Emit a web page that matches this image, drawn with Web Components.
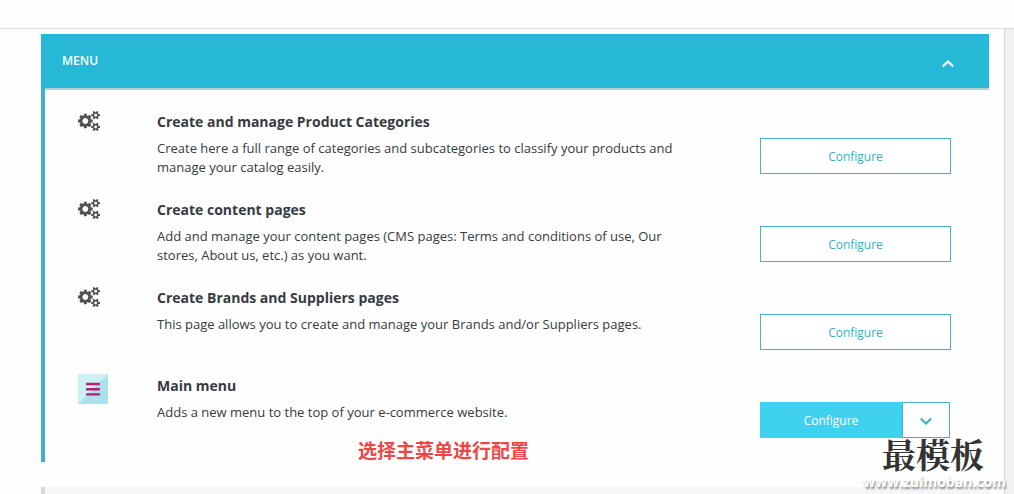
<!DOCTYPE html>
<html lang="en">
<head>
<meta charset="utf-8">
<title>Menu</title>
<style>
    body {
        margin: 0;
        background: #fefefe;
        color: #363a41;
        font: 13px/19px "Open Sans", "Noto Sans CJK SC", sans-serif;
    }
</style>
</head>
<body>
<theme-page>
    <theme-panel heading="MENU">
        <config-row heading="Create and manage Product Categories">
            <cogs-icon slot="icon"></cogs-icon>
            Create here a full range of categories and subcategories to classify your products and manage your catalog easily.
            <config-button slot="action"></config-button>
        </config-row>
        <config-row heading="Create content pages">
            <cogs-icon slot="icon"></cogs-icon>
            Add and manage your content pages (CMS pages: Terms and conditions of use, Our stores, About us, etc.) as you want.
            <config-button slot="action"></config-button>
        </config-row>
        <config-row heading="Create Brands and Suppliers pages">
            <cogs-icon slot="icon"></cogs-icon>
            This page allows you to create and manage your Brands and/or Suppliers pages.
            <config-button slot="action"></config-button>
        </config-row>
        <config-row heading="Main menu">
            <menu-icon slot="icon"></menu-icon>
            Adds a new menu to the top of your e-commerce website.
            <config-button slot="action" split></config-button>
        </config-row>
        <red-note slot="note">选择主菜单进行配置</red-note>
    </theme-panel>
</theme-page>
<water-mark>最模板<span slot="url">www.zuimoban.com</span></water-mark>

<script>
class ThemePage extends HTMLElement {
    constructor() {
        super();
        this.attachShadow({mode: 'open'});
        this.shadowRoot.innerHTML = `
            <style>
                :host {
                    display: flex;
                    flex-direction: column;
                    height: 100vh;
                    overflow: hidden;
                }
                header {
                    flex: none;
                    height: 28px;
                    border-bottom: 1px solid #d9dcde;
                }
                .columns {
                    flex: 1;
                    display: flex;
                    min-height: 0;
                }
                main {
                    flex: 1;
                    padding: 5px 15px 0 41px;
                }
                aside {
                    width: 9px;
                    background: #eff1f2;
                    border-left: 1px solid #d3d6d9;
                }
                .next {
                    height: 54px;
                    margin-top: 25px;
                    background: #f5f6f8;
                    border-left: 4px solid #dadadb;
                }
            </style>
            <header></header>
            <div class="columns">
                <main>
                    <slot></slot>
                    <div class="next"></div>
                </main>
                <aside></aside>
            </div>
        `;
    }
}
customElements.define('theme-page', ThemePage);

class ThemePanel extends HTMLElement {
    constructor() {
        super();
        this.attachShadow({mode: 'open'});
        this.shadowRoot.innerHTML = `
            <style>
                :host {
                    display: block;
                    position: relative;
                    border-left: 4px solid #3fb0c8;
                }
                header {
                    display: flex;
                    align-items: center;
                    justify-content: space-between;
                    height: 54px;
                    margin-left: -4px;
                    padding: 0 34px 0 21px;
                    box-sizing: border-box;
                    background: #25b9d7;
                    color: white;
                }
                h2 {
                    margin: 0;
                    padding-bottom: 2px;
                    font-size: 12px;
                    font-weight: 600;
                }
                button {
                    display: flex;
                    padding: 6px 0 0;
                    border: 0;
                    background: none;
                    color: inherit;
                }
                .rows {
                    padding-top: 20px;
                    border-top: 2px solid #b5cdd3;
                }
            </style>
            <header>
                <h2></h2>
                <button aria-label="Collapse">
                    <svg width="14" height="10" viewBox="0 0 14 10" fill="none" stroke="currentColor" stroke-width="2.2"><path d="M1.8 7.5 7 2.5l5.2 5"/></svg>
                </button>
            </header>
            <div class="rows"><slot></slot></div>
            <slot name="note"></slot>
        `;
    }

    connectedCallback() {
        this.shadowRoot.querySelector('h2').textContent = this.getAttribute('heading');
    }
}
customElements.define('theme-panel', ThemePanel);

class ConfigRow extends HTMLElement {
    constructor() {
        super();
        this.attachShadow({mode: 'open'});
        this.shadowRoot.innerHTML = `
            <style>
                :host {
                    display: flex;
                    min-height: 88px;
                    padding: 0 38px 0 33px;
                }
                .icon {
                    flex: none;
                    width: 79px;
                }
                .text {
                    flex: 1;
                    padding-right: 86px;
                }
                .action {
                    flex: none;
                    width: 191px;
                    padding-top: 28px;
                }
                h3 {
                    margin: 0 0 5px;
                    font-size: 14px;
                    line-height: 24px;
                    font-weight: 700;
                }
                p {
                    margin: 0;
                }
            </style>
            <div class="icon"><slot name="icon"></slot></div>
            <div class="text">
                <h3></h3>
                <p><slot></slot></p>
            </div>
            <div class="action"><slot name="action"></slot></div>
        `;
    }

    connectedCallback() {
        this.shadowRoot.querySelector('h3').textContent = this.getAttribute('heading');
    }
}
customElements.define('config-row', ConfigRow);

// plain outlined button, or a filled one with a dropdown arrow when "split" is set
class ConfigButton extends HTMLElement {
    constructor() {
        super();
        this.attachShadow({mode: 'open'});
        this.shadowRoot.innerHTML = `
            <style>
                :host {
                    display: flex;
                }
                button {
                    flex: 1;
                    height: 36px;
                    padding: 1px 0 0;
                    border: 1px solid #45b1c5;
                    background: white;
                    color: #38afc8;
                    font: 12px/18px "Open Sans", sans-serif;
                }
                .toggle {
                    display: none;
                    flex: none;
                    width: 48px;
                    align-items: center;
                    justify-content: center;
                }
                :host([split]) {
                    padding-right: 1px;
                }
                :host([split]) .main {
                    border-color: #3ed2f0;
                    background: #3ed2f0;
                    color: white;
                }
                :host([split]) .toggle {
                    display: flex;
                }
            </style>
            <button class="main">Configure</button>
            <button class="toggle" aria-label="More actions">
                <svg width="14" height="10" viewBox="0 0 14 10" fill="none" stroke="currentColor" stroke-width="2"><path d="M1.8 2.5 7 7.5l5.2-5"/></svg>
            </button>
        `;
    }
}
customElements.define('config-button', ConfigButton);

class CogsIcon extends HTMLElement {
    constructor() {
        super();
        this.attachShadow({mode: 'open'});
        this.shadowRoot.innerHTML = `
            <style>
                :host {
                    display: block;
                    color: #4f5154;
                }
                svg {
                    display: block;
                }
            </style>
            <svg width="22" height="22" viewBox="0 0 1920 1792" fill="currentColor"><path d="M896 896q0-106-75-181t-181-75-181 75-75 181 75 181 181 75 181-75 75-181zm768 512q0-52-38-90t-90-38-90 38-38 90q0 53 37.500 90.500t90.500 37.500 90.500-37.500 37.500-90.500zm0-1024q0-52-38-90t-90-38-90 38-38 90q0 53 37.500 90.500t90.500 37.500 90.500-37.500 37.500-90.500zm-384 421v185q0 10-7 19.500t-16 10.500l-155 24q-11 35-32 76 34 48 90 115 7 11 7 20 0 12-7 19-23 30-82.500 89.500t-78.500 59.500q-11 0-21-7l-115-90q-37 19-77 31-11 108-23 155-7 24-30 24h-186q-11 0-20-7.500t-10-17.500l-23-153q-34-10-75-31l-118 89q-7 7-20 7-11 0-21-8-144-133-144-160 0-9 7-19 10-14 41-53t47-61q-23-44-35-82l-152-24q-10-1-17-9.500t-7-19.500v-185q0-10 7-19.500t16-10.500l155-24q11-35 32-76-34-48-90-115-7-11-7-20 0-12 7-20 22-30 82-89t79-59q11 0 21 7l115 90q34-18 77-32 11-108 23-154 7-24 30-24h186q11 0 20 7.500t10 17.500l23 153q34 10 75 31l118-89q8-7 20-7 11 0 21 8 144 133 144 160 0 8-7 19-12 16-42 54t-45 60q23 48 34 82l152 23q10 2 17 10.500t7 19.500zm640 533v140q0 16-149 31-12 27-30 52 51 113 51 138 0 4-4 7-122 71-124 71-8 0-46-47t-52-68q-20 2-30 2t-30-2q-14 21-52 68t-46 47q-2 0-124-71-4-3-4-7 0-25 51-138-18-25-30-52-149-15-149-31v-140q0-16 149-31 13-29 30-52-51-113-51-138 0-4 4-7 4-2 35-20t59-34 30-16q8 0 46 46.500t52 67.500q20-2 30-2t30 2q51-71 92-112l6-2q4 0 124 70 4 3 4 7 0 25-51 138 17 23 30 52 149 15 149 31zm0-1024v140q0 16-149 31-12 27-30 52 51 113 51 138 0 4-4 7-122 71-124 71-8 0-46-47t-52-68q-20 2-30 2t-30-2q-14 21-52 68t-46 47q-2 0-124-71-4-3-4-7 0-25 51-138-18-25-30-52-149-15-149-31v-140q0-16 149-31 13-29 30-52-51-113-51-138 0-4 4-7 4-2 35-20t59-34 30-16q8 0 46 46.500t52 67.500q20-2 30-2t30 2q51-71 92-112l6-2q4 0 124 70 4 3 4 7 0 25-51 138 17 23 30 52 149 15 149 31z"/></svg>
        `;
    }
}
customElements.define('cogs-icon', CogsIcon);

class MenuIcon extends HTMLElement {
    constructor() {
        super();
        this.attachShadow({mode: 'open'});
        this.shadowRoot.innerHTML = `
            <style>
                :host, svg {
                    display: block;
                }
            </style>
            <svg width="30" height="30" viewBox="0 0 30 30">
                <path fill="#cdf0f6" d="M0 0h30v30H0z"/>
                <path fill="#a9e2ee" d="M30 0v30H0z"/>
                <path stroke="#b8206b" stroke-width="2.400" stroke-linecap="round" d="M9 10h12M9 15.200h12M9 20.400h12"/>
            </svg>
        `;
    }
}
customElements.define('menu-icon', MenuIcon);

// annotation lying over the panel
class RedNote extends HTMLElement {
    constructor() {
        super();
        this.attachShadow({mode: 'open'});
        this.shadowRoot.innerHTML = `
            <style>
                :host {
                    position: absolute;
                    left: 313px;
                    bottom: 0;
                    color: #ee4646;
                    font: 700 19px/24px "Noto Sans CJK SC", sans-serif;
                    white-space: nowrap;
                }
            </style>
            <slot></slot>
        `;
    }
}
customElements.define('red-note', RedNote);

class WaterMark extends HTMLElement {
    constructor() {
        super();
        this.attachShadow({mode: 'open'});
        this.shadowRoot.innerHTML = `
            <style>
                :host {
                    position: absolute;
                    right: 8px;
                    bottom: 3px;
                    display: flex;
                    flex-direction: column;
                    align-items: flex-end;
                    white-space: nowrap;
                }
                .name {
                    padding-right: 22px;
                    color: #333;
                    font: 700 34px/38px "Noto Serif CJK SC", "Noto Sans CJK SC", serif;
                }
                .url {
                    color: white;
                    font: 700 14px/18px "Open Sans", sans-serif;
                    text-shadow: 1px 2px 2px #888;
                }
            </style>
            <div class="name"><slot></slot></div>
            <div class="url"><slot name="url"></slot></div>
        `;
    }
}
customElements.define('water-mark', WaterMark);
</script>
</body>
</html>
